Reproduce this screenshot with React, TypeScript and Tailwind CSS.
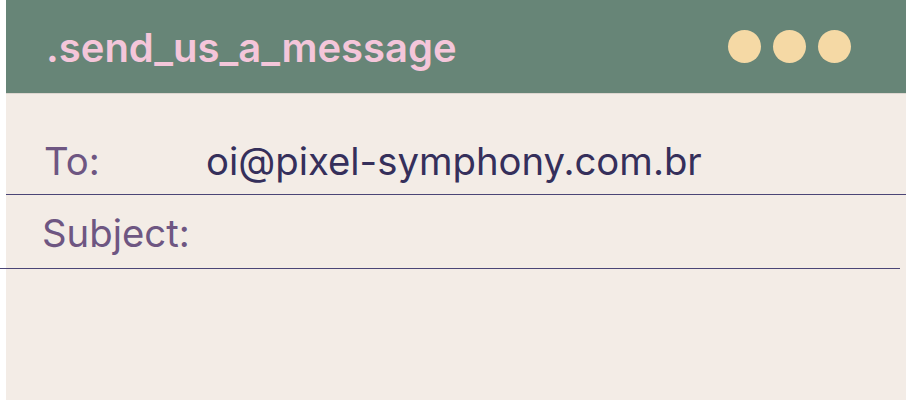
import React from "react";

export default function App() {
  return (
    <div className="w-[906px] h-[400px] bg-white overflow-hidden" style={{ fontFamily: "Inter, 'Noto Sans', sans-serif" }}>
      <div className="ml-[6px] h-[400px] bg-[#f3ece6] flex flex-col">
        <div className="h-[94px] bg-[#678577] flex items-center justify-between pl-[40px] pr-[55px] border-b border-[#ddd6d0]">
          <div className="text-[40px] font-semibold text-[#f4c6da] tracking-normal leading-none mt-[3px]">.send_us_a_message</div>
          <div className="flex gap-[12px]">
            <span className="w-[33px] h-[33px] rounded-full bg-[#f5d9a5]" />
            <span className="w-[33px] h-[33px] rounded-full bg-[#f5d9a5]" />
            <span className="w-[33px] h-[33px] rounded-full bg-[#f5d9a5]" />
          </div>
        </div>
        <div className="h-[101px] pt-[43px] flex text-[38.3px] leading-[48px] border-b border-[#4b4576]">
          <div className="w-[200px] pl-[38px] text-[#6e5682]">To:</div>
          <div className="text-[#352f5b]">oi@pixel-symphony.com.br</div>
        </div>
        <div className="h-[74px] pt-[14px] -ml-[6px] w-[900px] flex text-[38.3px] leading-[48px] border-b border-[#4b4576]">
          <div className="pl-[42px] text-[#6e5682]">Subject:</div>
        </div>
      </div>
    </div>
  );
}
